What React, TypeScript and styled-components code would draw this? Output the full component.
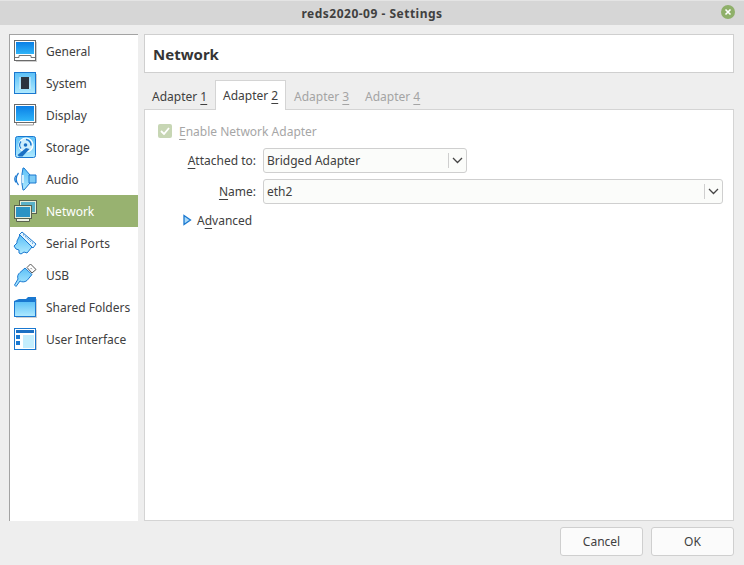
import React from "react";
import styled, { createGlobalStyle } from "styled-components";

const Global = createGlobalStyle`
  html, body { margin: 0; padding: 0; background: #eeeeee; }
  body { font-family: "Noto Sans", "Open Sans", sans-serif; font-size: 12px; color: #3a3a3a; }
  u { text-decoration-thickness: 1px; text-underline-offset: 3px; }
`;

const Window = styled.div`
  width: 744px; height: 565px; display: flex; flex-direction: column; background: #eeeeee; overflow: hidden;
`;
const TitleBar = styled.div`
  height: 25px; flex: none; background: #d6d6d6; display: flex; align-items: center; justify-content: center;
  position: relative; font-weight: 700; font-size: 12px; color: #404040; letter-spacing: 0.5px;
  border-top: 1px solid #e4e4e4; box-sizing: border-box;
`;
const CloseButton = styled.div`
  position: absolute; right: 9px; top: 4px; width: 14px; height: 14px; border-radius: 50%;
  background: #8fb06a; display: flex; align-items: center; justify-content: center;
`;
const Body = styled.div`
  flex: none; height: 487px; margin-top: 9px; padding: 0 10px 0 9px; display: flex; gap: 6px;
`;
const Sidebar = styled.div`
  width: 129px; flex: none; box-sizing: border-box; background: #fff;
  border-left: 1px solid #a3a3a3; border-top: 1px solid #a3a3a3;
`;
const Item = styled.div<{ $active?: boolean }>`
  height: 32px; display: flex; align-items: center; box-sizing: border-box; padding-left: 3px;
  background: ${p => (p.$active ? "#98b270" : "transparent")};
  color: ${p => (p.$active ? "#ffffff" : "#404040")};
  font-size: 12px;
`;
const ItemIcon = styled.svg`
  width: 24px; height: 24px; flex: none; margin-right: 9px; display: block;
`;
const Main = styled.div`
  flex: 1; min-width: 0; display: flex; flex-direction: column;
`;
const Header = styled.div`
  height: 39px; box-sizing: border-box; background: #fff; border: 1px solid #cfcfcf;
  display: flex; align-items: center; padding-left: 8px; font-size: 15px; font-weight: 700; color: #353535;
`;
const TabRow = styled.div`
  display: flex; height: 30px; margin-top: 7px; align-items: flex-end; position: relative; z-index: 1; margin-bottom: -1px;
`;
const Tab = styled.div<{ $active?: boolean; $disabled?: boolean }>`
  box-sizing: border-box; width: 71px; font-size: 12px; padding: 0 8px; display: flex; align-items: center; white-space: nowrap;
  color: ${p => (p.$disabled ? "#a4a4a4" : "#404040")};
  height: ${p => (p.$active ? "30px" : "29px")};
  ${p => p.$active ? "background:#fff;border:1px solid #d4d4d4;border-bottom:none;padding-left:7px;padding-right:7px;" : "padding-top:2px;"}
`;
const Panel = styled.div`
  flex: 1; background: #fff; border: 1px solid #d4d4d4; box-sizing: border-box; padding: 14px 10px 0 13px;
  display: flex; flex-direction: column;
`;
const CheckRow = styled.div`
  display: flex; align-items: center; gap: 7px; color: #a6a6a6; font-size: 12px; height: 14px;
`;
const CheckBox = styled.div`
  width: 14px; height: 14px; border-radius: 2px; background: #c7d6b4; display: flex; align-items: center; justify-content: center;
`;
const Form = styled.div`
  display: grid; grid-template-columns: 98px 1fr; column-gap: 7px; row-gap: 6px; margin-top: 10px;
`;
const Label = styled.div`
  text-align: right; align-self: center; font-size: 12px; color: #404040;
`;
const Combo = styled.div<{ $width?: number }>`
  height: 25px; box-sizing: border-box; border: 1px solid #cfcfcf; border-radius: 3px; background: #fbfcfa;
  display: flex; align-items: center; padding-left: 3px; font-size: 12px; color: #404040;
  width: ${p => (p.$width ? `${p.$width}px` : "100%")};
`;
const ComboText = styled.span`
  flex: 1;
`;
const ComboArrow = styled.div`
  width: 17px; height: 15px; flex: none; border-left: 1px solid #cfcfcf; display: flex; align-items: center; justify-content: center;
`;
const AdvancedRow = styled.div`
  display: flex; align-items: center; gap: 5px; margin: 7px 0 0 24px; height: 18px; font-size: 12px; color: #404040;
`;
const Footer = styled.div`
  display: flex; justify-content: flex-end; gap: 8px; padding: 6px 10px 0 0;
`;
const Button = styled.div`
  width: 83px; height: 29px; box-sizing: border-box; border: 1px solid #cfcfcf; border-radius: 3px; background: #fbfbfb;
  display: flex; align-items: center; justify-content: center; font-size: 12px; color: #404040;
`;

const blue = "url(#scr)";
const Defs = () => (
  <svg width="0" height="0" style={{ position: "absolute" }}>
    <defs>
      <linearGradient id="scr" x1="0" y1="0" x2="0" y2="1">
        <stop offset="0" stopColor="#0a7fe6" />
        <stop offset="1" stopColor="#2fb4f8" />
      </linearGradient>
      <linearGradient id="lite" x1="0" y1="0" x2="0" y2="1">
        <stop offset="0" stopColor="#5cc0f7" />
        <stop offset="1" stopColor="#b0eaff" />
      </linearGradient>
    </defs>
  </svg>
);

const GeneralIcon = () => (
  <ItemIcon viewBox="0 0 24 24">
    <rect x="1.500" y="1.500" width="21" height="20" fill="#fff" stroke="#6a6a6a" />
    <rect x="3" y="3" width="18" height="12" fill={blue} />
    <path d="M2 18.500h4v-2h12v2h4" fill="none" stroke="#777" />
    <path d="M3 22.500h21M23.500 3v20" stroke="#cfcfcf" />
  </ItemIcon>
);
const SystemIcon = () => (
  <ItemIcon viewBox="0 0 24 24">
    <rect x="1.500" y="1.500" width="21" height="21" fill="url(#lite)" stroke="#1a78d0" />
    <rect x="8" y="6" width="8" height="12" fill="#2c3440" />
    <path d="M6 7h2M6 9h2M6 11h2M6 13h2M6 15h2M6 17h2M16 7h2M16 9h2M16 11h2M16 13h2M16 15h2M16 17h2" stroke="#eef7fb" strokeWidth="0.8" />
    <path d="M23.500 3v20" stroke="#cfcfcf" />
  </ItemIcon>
);
const DisplayIcon = () => (
  <ItemIcon viewBox="0 0 24 24">
    <path d="M3.500 19v3h17v-3" fill="#fff" stroke="#999" />
    <rect x="1.500" y="1.500" width="21" height="18" fill="#fff" stroke="#6a6a6a" />
    <rect x="3" y="3" width="18" height="15" fill={blue} />
    <path d="M23.500 3v17" stroke="#cfcfcf" />
  </ItemIcon>
);
const StorageIcon = () => (
  <ItemIcon viewBox="0 0 24 24">
    <rect x="2.500" y="1.500" width="20" height="21" rx="2" fill="url(#lite)" stroke="#1a78d0" />
    <circle cx="13" cy="10" r="7" fill="#cdeefc" stroke="#fff" strokeWidth="1.200" />
    <path d="M13 4.500a5.500 5.500 0 0 1 5 6" fill="none" stroke="#1a78d0" strokeWidth="1.600" />
    <path d="M8 6.500a5.500 5.500 0 0 0 0 7" fill="none" stroke="#1a78d0" strokeWidth="1.200" />
    <circle cx="12.500" cy="10" r="1.800" fill="#1a70c4" />
    <path d="M4.500 20l8.500-7 3.500 1-7 7.500H6z" fill="#1a70c4" />
  </ItemIcon>
);
const AudioIcon = () => (
  <ItemIcon viewBox="0 0 24 24">
    <path d="M9 7l1-6h1l6 7v8l-6 7h-1l-1-6z" fill="url(#lite)" stroke="#1a78d0" />
    <path d="M16 8h7v8h-7z" fill="#7ccbf6" stroke="#1a78d0" />
    <path d="M5.500 6a9 9 0 0 0 0 12M3 8.500a6 6 0 0 0 0 7" fill="none" stroke="#1a78d0" strokeWidth="1.200" />
    <path d="M9 8h2v8H9z" fill="#d4f0ff" />
  </ItemIcon>
);
const NetworkIcon = () => (
  <ItemIcon viewBox="0 0 24 24">
    <rect x="6.500" y="1.500" width="17" height="13" fill="#e6edda" stroke="#59624e" />
    <rect x="8" y="3" width="14" height="10" fill="#5ab0c8" />
    <rect x="1.500" y="6.500" width="17" height="13" fill="#e6edda" stroke="#59624e" />
    <rect x="3" y="8" width="14" height="10" fill="#2b93c4" />
    <path d="M3.500 20v2.500h13V20" fill="#eef3e6" stroke="#59624e" />
  </ItemIcon>
);
const SerialIcon = () => (
  <ItemIcon viewBox="0 0 24 24">
    <path d="M9 1l14 12-3 4L6 4z" fill="#e5f6ff" stroke="#1a78d0" />
    <path d="M7 4L19 16l-5 6-3-1-3 2-2-1v-3l-3-1-2-3 3-3v-2z" fill="url(#lite)" stroke="#1a78d0" />
    <path d="M10 3.500l11 10" stroke="#1a78d0" strokeDasharray="1.500 1.500" />
  </ItemIcon>
);
const UsbIcon = () => (
  <ItemIcon viewBox="0 0 24 24">
    <path d="M17.500 1l5.500 5.500-4 3.500-5-5.500z" fill="#fff" stroke="#555" />
    <path d="M17.800 5.200l1 1" stroke="#555" />
    <path d="M12 5l7 6.500-5 6c-2.500 2-5.500 1.500-7 .5l-4 5.500-1.500-1.500 3.500-6c-1-2.500 0-5 2-6.500z" fill="url(#lite)" stroke="#1a78d0" />
  </ItemIcon>
);
const FolderIcon = () => (
  <ItemIcon viewBox="0 0 24 24">
    <path d="M1 6l5-2h7l2-2h8v20H1z" fill="#1a78d0" />
    <path d="M1.500 6.500h21v15h-21z" fill="url(#lite)" stroke="#1a78d0" />
    <path d="M23.500 4v19M3 22.500h21" stroke="#cfcfcf" />
  </ItemIcon>
);
const UiIcon = () => (
  <ItemIcon viewBox="0 0 24 24">
    <rect x="1.500" y="1.500" width="21" height="21" fill="#fff" stroke="#1a78d0" />
    <rect x="3" y="3" width="18" height="3" fill="#1a70c4" />
    <rect x="10" y="8" width="11" height="13" fill="#c4eefd" />
    <rect x="3" y="8" width="4" height="4" fill="#1a78d0" />
    <rect x="3" y="14" width="4" height="4" fill="#1a78d0" />
    <path d="M23.500 3v20" stroke="#cfcfcf" />
  </ItemIcon>
);

const Chevron = () => (
  <svg width="11" height="7" viewBox="0 0 11 7"><path d="M1 1l4.500 4.500L10 1" fill="none" stroke="#454545" strokeWidth="1.300" /></svg>
);

const items: [string, React.FC][] = [
  ["General", GeneralIcon], ["System", SystemIcon], ["Display", DisplayIcon], ["Storage", StorageIcon],
  ["Audio", AudioIcon], ["Network", NetworkIcon], ["Serial Ports", SerialIcon], ["USB", UsbIcon],
  ["Shared Folders", FolderIcon], ["User Interface", UiIcon],
];

export default function App() {
  return (
    <Window>
      <Global />
      <Defs />
      <TitleBar>
        reds2020-09 - Settings
        <CloseButton>
          <svg width="8" height="8" viewBox="0 0 8 8"><path d="M1.500 1.500l5 5M6.500 1.500l-5 5" stroke="#fff" strokeWidth="1.600" /></svg>
        </CloseButton>
      </TitleBar>
      <Body>
        <Sidebar>
          {items.map(([name, Icon]) => (
            <Item key={name} $active={name === "Network"}><Icon />{name}</Item>
          ))}
        </Sidebar>
        <Main>
          <Header>Network</Header>
          <TabRow>
            <Tab>Adapter&nbsp;<u>1</u></Tab>
            <Tab $active>Adapter&nbsp;<u>2</u></Tab>
            <Tab $disabled>Adapter&nbsp;<u>3</u></Tab>
            <Tab $disabled>Adapter&nbsp;<u>4</u></Tab>
          </TabRow>
          <Panel>
            <CheckRow>
              <CheckBox>
                <svg width="10" height="8" viewBox="0 0 10 8"><path d="M1 4l3 3 5-6" fill="none" stroke="#fff" strokeWidth="1.800" /></svg>
              </CheckBox>
              <span><u>E</u>nable Network Adapter</span>
            </CheckRow>
            <Form>
              <Label><u>A</u>ttached to:</Label>
              <Combo $width={204}><ComboText>Bridged Adapter</ComboText><ComboArrow><Chevron /></ComboArrow></Combo>
              <Label><u>N</u>ame:</Label>
              <Combo><ComboText>eth2</ComboText><ComboArrow><Chevron /></ComboArrow></Combo>
            </Form>
            <AdvancedRow>
              <svg width="10" height="12" viewBox="0 0 10 12"><path d="M2 1.500l6.500 4.500L2 10.500z" fill="#a9dafa" stroke="#1a78d0" strokeWidth="1.300" /></svg>
              <span>A<u>d</u>vanced</span>
            </AdvancedRow>
          </Panel>
        </Main>
      </Body>
      <Footer>
        <Button>Cancel</Button>
        <Button>OK</Button>
      </Footer>
    </Window>
  );
}
